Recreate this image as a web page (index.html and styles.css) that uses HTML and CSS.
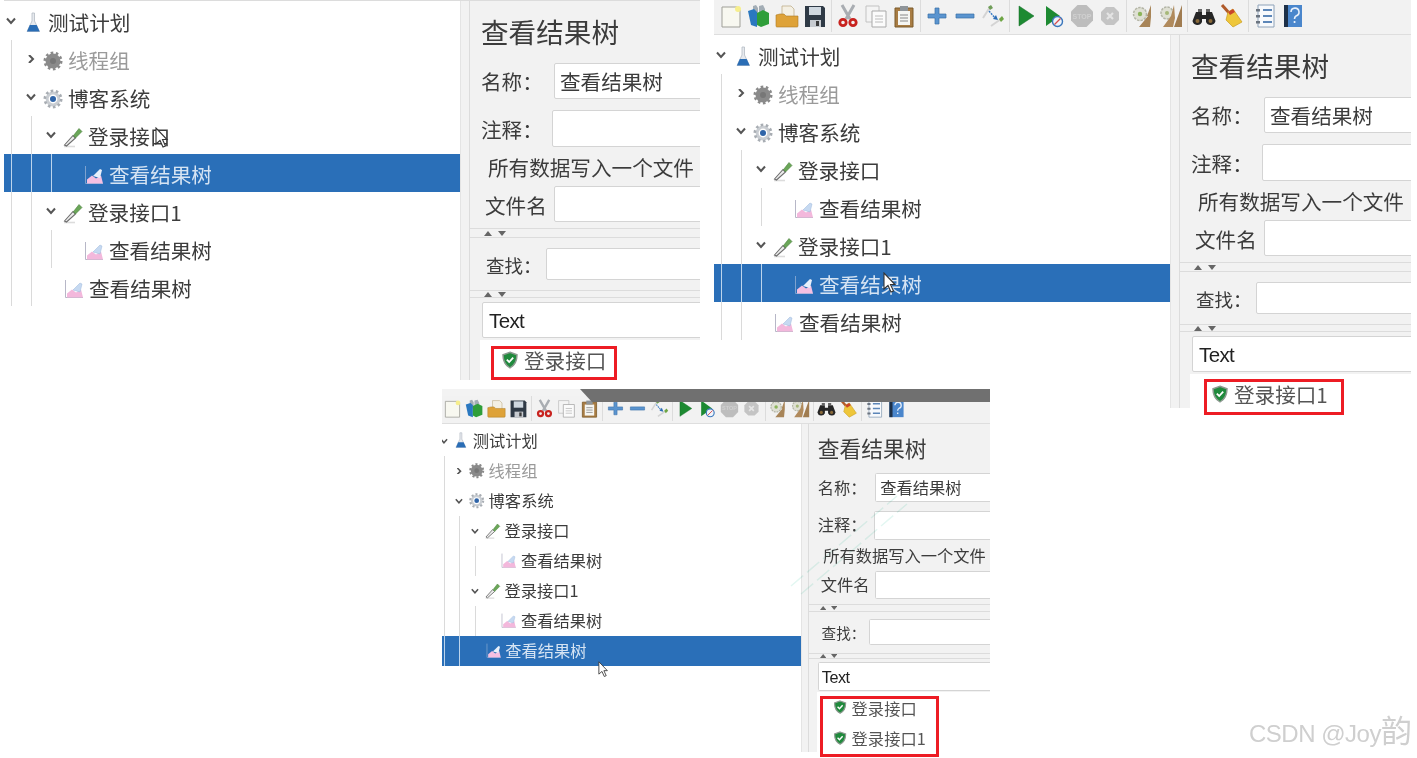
FILE: index.html
```html
<!DOCTYPE html>
<html lang="zh">
<head>
<meta charset="utf-8">
<title>查看结果树</title>
<link rel="stylesheet" href="styles.css">
</head>
<body>
<svg class="sprite" xmlns="http://www.w3.org/2000/svg">
  <defs>
    <symbol id="down" viewBox="0 0 10 8"><path d="M1 1.500 5 6 9 1.500" fill="none" stroke="#555" stroke-width="2"/></symbol>
    <symbol id="right" viewBox="0 0 10 8"><path d="M3 0 7 4 3 8" fill="none" stroke="#555" stroke-width="2"/></symbol>
    <symbol id="flask" viewBox="0 0 22 22"><path d="M10 1h2.500v8l5 10.500H5l5-10.500z" fill="#e6e9ee" stroke="#b4bbc4" stroke-width=".8"/><path d="M7.800 13h6.900l3 6.500H5z" fill="#2a6db5"/></symbol>
    <symbol id="gearg" viewBox="0 0 22 22"><circle cx="11" cy="11" r="7.500" fill="#8a8a8a"/><circle cx="11" cy="11" r="8.200" fill="none" stroke="#8a8a8a" stroke-width="2.600" stroke-dasharray="2.600 2.550"/><circle cx="11" cy="11" r="3" fill="#777"/></symbol>
    <symbol id="gearb" viewBox="0 0 22 22"><circle cx="11" cy="11" r="7.400" fill="#c9cdd2"/><circle cx="11" cy="11" r="8.200" fill="none" stroke="#a8adb3" stroke-width="2.600" stroke-dasharray="2.600 2.550"/><circle cx="11" cy="11" r="4.400" fill="#fff"/><circle cx="11" cy="11" r="3" fill="#2f64a8"/></symbol>
    <symbol id="pipette" viewBox="0 0 22 22"><path d="M2 20.500h11" stroke="#dcdcdc" stroke-width="1.600"/><path d="M2.500 19 11 9.500l2.500 2.500-9 8z" fill="#ececec" stroke="#6e6e6e" stroke-width="1.100"/><path d="M11.500 9.500l5.500-7 3 3-6.500 6.500z" fill="#6aa658" stroke="#4a7f3c" stroke-width=".6"/></symbol>
    <symbol id="chart" viewBox="0 0 22 22"><path d="M2.500 2v17.500H20" fill="none" stroke="#b7b7c7" stroke-width="1"/><path d="M4 19.500v-4l5-4 4 3 5-3 2 8z" fill="#f3b8dc"/><path d="M10 12l7-7 2 1-2 8z" fill="#c6d9f1" stroke="#9db8dc" stroke-width=".5"/></symbol>
    <symbol id="chartw" viewBox="0 0 22 22"><path d="M2.500 2v17.500H20" fill="none" stroke="#7da2cf" stroke-width="1"/><path d="M4 19.500v-4l5-4 4 3 5-3 2 8z" fill="#f6c0e2"/><path d="M10 12l7-7 2 1-2 8z" fill="#e8f0fb"/></symbol>
    <symbol id="shield" viewBox="0 0 18 18"><path d="M9 1.200 16 3.800c0 6.200-1.700 10.400-7 13C3.700 14.200 2 10 2 3.800z" fill="#1f8a3c" stroke="#8d9a90" stroke-width="1.500"/><path d="M5.800 8.600 8.200 11l4-4.400" fill="none" stroke="#fff" stroke-width="1.800"/></symbol>

    <symbol id="t-new" viewBox="0 0 24 24"><path d="M3 3h15l3 3v17H3z" fill="#f8f8f0" stroke="#9f9f98" stroke-width="1"/><circle cx="19" cy="5" r="3" fill="#f6ee8c"/></symbol>
    <symbol id="t-book" viewBox="0 0 24 24"><path d="M6 2l3-1 2 3v8H6zM12 2l4-1 2 4v7h-6z" fill="#a3adb5"/><path d="M1 7l6-2 3 3v15l-6-2z" fill="#2a78c0"/><path d="M10 9l6-3 6 3v11l-8 3-4-2z" fill="#2f9e3a"/></symbol>
    <symbol id="t-open" viewBox="0 0 24 24"><path d="M7 2h9l3 3v9H7z" fill="#f4f0e4" stroke="#b9a77f" stroke-width=".7"/><path d="M1 11l4-1h4l2 2h12v10c0 1-1 1-1 1H2s-1 0-1-1z" fill="#dea238" stroke="#ad7b22" stroke-width=".6"/></symbol>
    <symbol id="t-save" viewBox="0 0 24 24"><path d="M2 2h18l2 2v19H2z" fill="#2f3a46"/><path d="M6 3h12v8H6z" fill="#cfd8e0"/><path d="M7 16h11v7H7z" fill="#c7cbd0"/><path d="M13 17h3v5h-3z" fill="#3b3b3b"/></symbol>
    <symbol id="t-cut" viewBox="0 0 24 24"><path d="M6 1l8 14M18 1l-8 14" stroke="#a9adb2" stroke-width="3"/><circle cx="7" cy="18.500" r="3.200" fill="none" stroke="#c8231f" stroke-width="2.800"/><circle cx="17" cy="18.500" r="3.200" fill="none" stroke="#c8231f" stroke-width="2.800"/></symbol>
    <symbol id="t-copy" viewBox="0 0 24 24"><path d="M2 2h13v16H2z" fill="#f4f4f4" stroke="#c2c2c2"/><path d="M8 7h14v16H8z" fill="#fbfbfb" stroke="#a9a9a9"/><path d="M11 12h8M11 15h8M11 18h8" stroke="#bcbcbc"/></symbol>
    <symbol id="t-paste" viewBox="0 0 24 24"><path d="M3 4h18v19H3z" fill="#a87c43" stroke="#7b5a2a"/><path d="M6 7h12v14H6z" fill="#f6f6f2"/><path d="M8 2h8v5H8z" fill="#8e9499"/><path d="M8 11h8M8 14h8M8 17h8" stroke="#888"/></symbol>
    <symbol id="t-plus" viewBox="0 0 24 24"><path d="M10 4h4v6h7v4h-7v6h-4v-6H3v-4h7z" fill="#5a94cf" stroke="#3a70a8" stroke-width=".7"/></symbol>
    <symbol id="t-minus" viewBox="0 0 24 24"><path d="M3 10h18v4H3z" fill="#5a94cf" stroke="#3a70a8" stroke-width=".7"/></symbol>
    <symbol id="t-toggle" viewBox="0 0 24 24"><path d="M2 14l7-11M10 22l10-7" stroke="#d4d4d4" stroke-width="2"/><path d="M7 3l3-2 2 3-3 2z" fill="#6f9d58"/><path d="M18 15l3-3 2 3-3 3z" fill="#6ea544"/><path d="M8 7l6 7" stroke="#3a7cc4" stroke-width="1.400" stroke-dasharray="2 1"/><path d="M12 15l5 1-2-5z" fill="#2c6db6"/></symbol>
    <symbol id="t-play" viewBox="0 0 24 24"><path d="M5 2l15 10L5 22z" fill="#1d8a32" stroke="#156a26" stroke-width=".5"/></symbol>
    <symbol id="t-noproxy" viewBox="0 0 24 24"><path d="M4 2l14 10L4 22z" fill="#1d8a32"/><circle cx="15.500" cy="17.500" r="5" fill="#eef3fa" stroke="#3a76bb" stroke-width="1.400"/><path d="M12.500 20.500l6-6" stroke="#d84b4b" stroke-width="1.200"/></symbol>
    <symbol id="t-stop" viewBox="0 0 24 24"><path d="M7.500 1h9L23 7.500v9L16.500 23h-9L1 16.500v-9z" fill="#bdbdbd"/><text x="12" y="14.500" text-anchor="middle" font-size="7" font-family="Liberation Sans" font-weight="700" fill="#d0d0d0">STOP</text></symbol>
    <symbol id="t-x" viewBox="0 0 24 24"><path d="M8 3h8l5 5v8l-5 5H8l-5-5V8z" fill="#c4c4c4"/><path d="M9 9l6 6M15 9l-6 6" stroke="#e4e4e4" stroke-width="2.200"/></symbol>
    <symbol id="t-clear" viewBox="0 0 24 24"><circle cx="9" cy="10" r="6.500" fill="#dfe0d4" stroke="#b3b5a6" stroke-width="1.500" stroke-dasharray="2.500 1"/><circle cx="9" cy="10" r="2.200" fill="#8cb45a"/><path d="M20 1l-4 11 1 0-9 11h11l1-10z" fill="#a88558"/></symbol>
    <symbol id="t-clearall" viewBox="0 0 24 24"><circle cx="8" cy="9" r="6" fill="#dfe0d4" stroke="#b3b5a6" stroke-width="1.500" stroke-dasharray="2.500 1"/><circle cx="8" cy="9" r="2" fill="#a6b878"/><path d="M15 1l-3 11-8 11h10l2-9z" fill="#b08a5c"/><path d="M23 1l-4 11-4 11h8z" fill="#a07c50"/></symbol>
    <symbol id="t-bino" viewBox="0 0 24 24"><path d="M4 8h6v3h4V8h6l3.500 9a5 5 0 0 1-9.500 1v-3h-4v3a5 5 0 0 1-9.500-1z" fill="#262626"/><path d="M6 5h4v3H6zM14 5h4v3h-4z" fill="#666"/><circle cx="5.500" cy="17" r="2" fill="#8a6a3a"/><circle cx="18.500" cy="17" r="2" fill="#8a6a3a"/></symbol>
    <symbol id="t-broom" viewBox="0 0 24 24"><path d="M2 1l8 9" stroke="#b05a2a" stroke-width="3"/><path d="M8 8l5-3 9 13-9 5-7-7z" fill="#eec63a" stroke="#c99c22" stroke-width=".7"/><path d="M8 8l5-3 2 3-5 3z" fill="#c8452a"/></symbol>
    <symbol id="t-list" viewBox="0 0 24 24"><path d="M5 1h16v22H5z" fill="#f7f9fc" stroke="#8ea2b8"/><path d="M10 6h9M10 12h9M10 18h9" stroke="#5c86b8" stroke-width="2"/><path d="M3 5h4v2.500H3zM3 11h4v2.500H3zM3 17h4v2.500H3z" fill="#6b7480"/></symbol>
    <symbol id="t-help" viewBox="0 0 24 24"><path d="M3 1h18v22H3z" fill="#4a86cc"/><path d="M3 1h4v22H3z" fill="#1d3048"/><path d="M10 8a4 4 0 1 1 5 4c-1 .6-1.500 1-1.500 3" fill="none" stroke="#e8f0fb" stroke-width="1.600"/><path d="M12.700 17h1.700v2h-1.700z" fill="#e8f0fb"/></symbol>
    <symbol id="cursor" viewBox="0 0 14 22"><path d="M1 1v16l4-3.500 3 6.500 2.500-1-3-6.500H12z" fill="#fff" stroke="#333" stroke-width="1.100"/></symbol>
  </defs>
</svg>

<!-- 左上窗口 -->
<section class="win win-a">
  <div class="topline"></div>
  <div class="split">
    <div class="tree">
      <div class="row"><svg class="chev"><use href="#down"/></svg><svg class="ico"><use href="#flask"/></svg><span class="lbl">测试计划</span></div>
      <div class="row off"><i class="ind"></i><svg class="chev"><use href="#right"/></svg><svg class="ico"><use href="#gearg"/></svg><span class="lbl">线程组</span></div>
      <div class="row"><i class="ind"></i><svg class="chev"><use href="#down"/></svg><svg class="ico"><use href="#gearb"/></svg><span class="lbl">博客系统</span></div>
      <div class="row"><i class="ind"></i><i class="ind"></i><svg class="chev"><use href="#down"/></svg><svg class="ico"><use href="#pipette"/></svg><span class="lbl">登录接口</span></div>
      <div class="row sel"><i class="ind"></i><i class="ind"></i><i class="ind"></i><i class="chev"></i><svg class="ico"><use href="#chartw"/></svg><span class="lbl">查看结果树</span></div>
      <div class="row"><i class="ind"></i><i class="ind"></i><svg class="chev"><use href="#down"/></svg><svg class="ico"><use href="#pipette"/></svg><span class="lbl">登录接口1</span></div>
      <div class="row"><i class="ind"></i><i class="ind"></i><i class="ind"></i><i class="chev"></i><svg class="ico"><use href="#chart"/></svg><span class="lbl">查看结果树</span></div>
      <div class="row"><i class="ind"></i><i class="ind"></i><i class="chev"></i><svg class="ico"><use href="#chart"/></svg><span class="lbl">查看结果树</span></div>
    </div>
    <div class="panel">
      <div class="inner">
        <h2 class="title">查看结果树</h2>
        <div class="frow f-name"><span class="flabel">名称：</span><span class="field">查看结果树</span></div>
        <div class="frow f-note"><span class="flabel">注释：</span><span class="field"></span></div>
        <div class="legend">所有数据写入一个文件</div>
        <div class="frow f-file"><span class="flabel">文件名</span><span class="field"></span></div>
        <div class="divider div-a"><svg class="tri" viewBox="0 0 8 5"><path d="M0 5 4 0l4 5z"/></svg><svg class="tri" viewBox="0 0 8 5"><path d="M0 0h8L4 5z"/></svg></div>
        <div class="frow f-find"><span class="flabel">查找：</span><span class="field"></span></div>
        <div class="divider div-b"><svg class="tri" viewBox="0 0 8 5"><path d="M0 5 4 0l4 5z"/></svg><svg class="tri" viewBox="0 0 8 5"><path d="M0 0h8L4 5z"/></svg></div>
        <div class="combo">Text</div>
        <div class="results">
          <div class="res"><svg class="shield"><use href="#shield"/></svg><span>登录接口</span></div>
        </div>
      </div>
    </div>
  </div>
</section>

<!-- 右上窗口 -->
<section class="win win-b">
  <div class="toolbar">
    <svg class="tb"><use href="#t-new"/></svg><svg class="tb"><use href="#t-book"/></svg><svg class="tb"><use href="#t-open"/></svg><svg class="tb"><use href="#t-save"/></svg><i class="sep"></i>
    <svg class="tb"><use href="#t-cut"/></svg><svg class="tb"><use href="#t-copy"/></svg><svg class="tb"><use href="#t-paste"/></svg><i class="sep"></i>
    <svg class="tb"><use href="#t-plus"/></svg><svg class="tb"><use href="#t-minus"/></svg><svg class="tb"><use href="#t-toggle"/></svg><i class="sep"></i>
    <svg class="tb"><use href="#t-play"/></svg><svg class="tb"><use href="#t-noproxy"/></svg><svg class="tb"><use href="#t-stop"/></svg><svg class="tb"><use href="#t-x"/></svg><i class="sep"></i>
    <svg class="tb"><use href="#t-clear"/></svg><svg class="tb"><use href="#t-clearall"/></svg><i class="sep"></i>
    <svg class="tb"><use href="#t-bino"/></svg><svg class="tb"><use href="#t-broom"/></svg><i class="sep"></i>
    <svg class="tb"><use href="#t-list"/></svg><svg class="tb"><use href="#t-help"/></svg>
  </div>
  <div class="split">
    <div class="tree">
      <div class="row"><svg class="chev"><use href="#down"/></svg><svg class="ico"><use href="#flask"/></svg><span class="lbl">测试计划</span></div>
      <div class="row off"><i class="ind"></i><svg class="chev"><use href="#right"/></svg><svg class="ico"><use href="#gearg"/></svg><span class="lbl">线程组</span></div>
      <div class="row"><i class="ind"></i><svg class="chev"><use href="#down"/></svg><svg class="ico"><use href="#gearb"/></svg><span class="lbl">博客系统</span></div>
      <div class="row"><i class="ind"></i><i class="ind"></i><svg class="chev"><use href="#down"/></svg><svg class="ico"><use href="#pipette"/></svg><span class="lbl">登录接口</span></div>
      <div class="row"><i class="ind"></i><i class="ind"></i><i class="ind"></i><i class="chev"></i><svg class="ico"><use href="#chart"/></svg><span class="lbl">查看结果树</span></div>
      <div class="row"><i class="ind"></i><i class="ind"></i><svg class="chev"><use href="#down"/></svg><svg class="ico"><use href="#pipette"/></svg><span class="lbl">登录接口1</span></div>
      <div class="row sel"><i class="ind"></i><i class="ind"></i><i class="ind"></i><i class="chev"></i><svg class="ico"><use href="#chartw"/></svg><span class="lbl">查看结果树</span></div>
      <div class="row"><i class="ind"></i><i class="ind"></i><i class="chev"></i><svg class="ico"><use href="#chart"/></svg><span class="lbl">查看结果树</span></div>
    </div>
    <div class="panel">
      <div class="inner">
        <h2 class="title">查看结果树</h2>
        <div class="frow f-name"><span class="flabel">名称：</span><span class="field">查看结果树</span></div>
        <div class="frow f-note"><span class="flabel">注释：</span><span class="field"></span></div>
        <div class="legend">所有数据写入一个文件</div>
        <div class="frow f-file"><span class="flabel">文件名</span><span class="field"></span></div>
        <div class="divider div-a"><svg class="tri" viewBox="0 0 8 5"><path d="M0 5 4 0l4 5z"/></svg><svg class="tri" viewBox="0 0 8 5"><path d="M0 0h8L4 5z"/></svg></div>
        <div class="frow f-find"><span class="flabel">查找：</span><span class="field"></span></div>
        <div class="divider div-b"><svg class="tri" viewBox="0 0 8 5"><path d="M0 5 4 0l4 5z"/></svg><svg class="tri" viewBox="0 0 8 5"><path d="M0 0h8L4 5z"/></svg></div>
        <div class="combo">Text</div>
        <div class="results">
          <div class="res"><svg class="shield"><use href="#shield"/></svg><span>登录接口1</span></div>
        </div>
      </div>
    </div>
  </div>
</section>

<!-- 下方窗口 -->
<section class="win win-c">
  <div class="tabstrip"></div>
  <div class="scaled">
    <div class="toolbar">
      <svg class="tb"><use href="#t-new"/></svg><svg class="tb"><use href="#t-book"/></svg><svg class="tb"><use href="#t-open"/></svg><svg class="tb"><use href="#t-save"/></svg><i class="sep"></i>
      <svg class="tb"><use href="#t-cut"/></svg><svg class="tb"><use href="#t-copy"/></svg><svg class="tb"><use href="#t-paste"/></svg><i class="sep"></i>
      <svg class="tb"><use href="#t-plus"/></svg><svg class="tb"><use href="#t-minus"/></svg><svg class="tb"><use href="#t-toggle"/></svg><i class="sep"></i>
      <svg class="tb"><use href="#t-play"/></svg><svg class="tb"><use href="#t-noproxy"/></svg><svg class="tb"><use href="#t-stop"/></svg><svg class="tb"><use href="#t-x"/></svg><i class="sep"></i>
      <svg class="tb"><use href="#t-clear"/></svg><svg class="tb"><use href="#t-clearall"/></svg><i class="sep"></i>
      <svg class="tb"><use href="#t-bino"/></svg><svg class="tb"><use href="#t-broom"/></svg><i class="sep"></i>
      <svg class="tb"><use href="#t-list"/></svg><svg class="tb"><use href="#t-help"/></svg>
    </div>
    <div class="split">
      <div class="tree">
        <div class="row"><svg class="chev"><use href="#down"/></svg><svg class="ico"><use href="#flask"/></svg><span class="lbl">测试计划</span></div>
        <div class="row off"><i class="ind"></i><svg class="chev"><use href="#right"/></svg><svg class="ico"><use href="#gearg"/></svg><span class="lbl">线程组</span></div>
        <div class="row"><i class="ind"></i><svg class="chev"><use href="#down"/></svg><svg class="ico"><use href="#gearb"/></svg><span class="lbl">博客系统</span></div>
        <div class="row"><i class="ind"></i><i class="ind"></i><svg class="chev"><use href="#down"/></svg><svg class="ico"><use href="#pipette"/></svg><span class="lbl">登录接口</span></div>
        <div class="row"><i class="ind"></i><i class="ind"></i><i class="ind"></i><i class="chev"></i><svg class="ico"><use href="#chart"/></svg><span class="lbl">查看结果树</span></div>
        <div class="row"><i class="ind"></i><i class="ind"></i><svg class="chev"><use href="#down"/></svg><svg class="ico"><use href="#pipette"/></svg><span class="lbl">登录接口1</span></div>
        <div class="row"><i class="ind"></i><i class="ind"></i><i class="ind"></i><i class="chev"></i><svg class="ico"><use href="#chart"/></svg><span class="lbl">查看结果树</span></div>
        <div class="row sel"><i class="ind"></i><i class="ind"></i><i class="chev"></i><svg class="ico"><use href="#chartw"/></svg><span class="lbl">查看结果树</span></div>
      </div>
      <div class="panel">
        <div class="inner">
          <h2 class="title">查看结果树</h2>
          <div class="frow f-name"><span class="flabel">名称：</span><span class="field">查看结果树</span></div>
          <div class="frow f-note"><span class="flabel">注释：</span><span class="field"></span></div>
          <div class="legend">所有数据写入一个文件</div>
          <div class="frow f-file"><span class="flabel">文件名</span><span class="field"></span></div>
          <div class="divider div-a"><svg class="tri" viewBox="0 0 8 5"><path d="M0 5 4 0l4 5z"/></svg><svg class="tri" viewBox="0 0 8 5"><path d="M0 0h8L4 5z"/></svg></div>
          <div class="frow f-find"><span class="flabel">查找：</span><span class="field"></span></div>
          <div class="divider div-b"><svg class="tri" viewBox="0 0 8 5"><path d="M0 5 4 0l4 5z"/></svg><svg class="tri" viewBox="0 0 8 5"><path d="M0 0h8L4 5z"/></svg></div>
          <div class="combo">Text</div>
          <div class="results">
            <div class="res"><svg class="shield"><use href="#shield"/></svg><span>登录接口</span></div>
            <div class="res"><svg class="shield"><use href="#shield"/></svg><span>登录接口1</span></div>
          </div>
        </div>
      </div>
    </div>
  </div>
</section>

<svg class="ghost" viewBox="0 0 130 110"><path d="M6 96 112 6M16 104 122 14" fill="none" stroke="#e3f7f2" stroke-width="1.500" stroke-dasharray="16 5"/></svg>
<div class="band"></div>
<div class="redbox box-a"></div>
<div class="redbox box-b"></div>
<div class="redbox box-c"></div>
<svg class="cursor cur-a"><use href="#cursor"/></svg>
<svg class="cursor cur-b"><use href="#cursor"/></svg>
<svg class="cursor cur-c"><use href="#cursor"/></svg>
<div class="mark">CSDN @Joy<span class="mark-cjk">韵</span></div>
</body>
</html>
```

FILE: styles.css
```css
* { box-sizing: border-box; }
html, body { margin: 0; padding: 0; }
body {
  position: relative;
  width: 1417px;
  height: 758px;
  overflow: hidden;
  background: #fff;
  font-family: "Noto Sans CJK SC", "Noto Sans", sans-serif;
  color: #3c3c3c;
}
.sprite { position: absolute; width: 0; height: 0; }

.win { position: absolute; overflow: hidden; background: #fff; filter: blur(0.35px); --lift: 4px; }
.win-a { left: 4px; top: 0; width: 696px; height: 380px; }
.win-b { left: 714px; top: 0; width: 697px; height: 408px; }
.win-c { left: 442px; top: 389px; width: 548px; height: 363px; --lift: 0px; }
.win-a .split { height: 379px; }
.win-b .split { height: 373px; }
.win-c .split { height: 450px; }
.tabstrip { height: 7px; background: #f3f3f3; }
.scaled { zoom: 0.79; width: 694px; }
.topline { height: 1px; background: #dcdcdc; }

.toolbar {
  display: flex;
  align-items: center;
  height: 35px;
  padding: 0 0 3px 3px;
  background: #f2f2f2;
  border-bottom: 1px solid #dedede;
}
.tb { width: 24px; height: 24px; margin: 0 2px; flex: none; }
.sep { width: 1px; height: 32px; margin: 0 2px; background: #dcdcdc; flex: none; }
.win-c .toolbar { padding-left: 0; }
.win-c .tb:first-child { margin-left: 1px; }
.win-c .sep { margin: 0 2.1px; }

.split { display: flex; }
.tree { width: 456px; flex: none; padding-top: 1px; background: #fff; }
.win-c .tree { width: 454px; padding-top: 3px; }
.row {
  display: flex;
  align-items: center;
  height: 38px;
  padding-left: 7px;
  padding-top: var(--lift);
  font-size: 20.6px;
  line-height: 34px;
  white-space: nowrap;
}
.win-c .row { padding-left: 2px; }
.row.off { color: #9a9a9a; }
.row.sel { background: #2a6fb8; color: #d6e4f3; }
.ind { width: 20px; height: 38px; flex: none; align-self: flex-start; margin-top: calc(-1 * var(--lift)); border-left: 1px solid #dadada; }
.sel .ind { border-left-color: #bcd4ec; }
.chev { width: 10px; height: 8px; margin-left: -5px; margin-top: calc(-1 * var(--lift)); flex: none; display: block; }
i.chev { margin-right: 1px; }
.ico { width: 22px; height: 22px; margin-left: 6px; margin-right: 4px; flex: none; }
.lbl { margin-top: -2px; }

.panel { flex: 1; padding-left: 8px; background: #f2f2f2; border-left: 1px solid #e4e4e4; min-width: 0; overflow: hidden; }
.inner { height: 100%; border-left: 1px solid #dcdcdc; padding-top: 10px; width: 300px; }
.win-c .inner { padding-top: 11px; }
.title { margin: 0 0 12px 11px; font-size: 27.6px; line-height: 40px; font-weight: 400; color: #3c3c3c; }

.frow { display: flex; align-items: center; }
.flabel { font-size: 20.6px; line-height: 30px; white-space: nowrap; flex: none; }
.field {
  display: block;
  width: 260px;
  flex: none;
  background: #fff;
  border: 1px solid #d4d4d4;
  border-radius: 2px;
  padding-left: 5px;
  font-size: 20.6px;
  line-height: 34px;
  height: 36px;
  white-space: nowrap;
}
.f-name .flabel { width: 73px; margin-left: 11px; }
.f-note { margin-top: 11px; }
.f-note .flabel { width: 71px; margin-left: 11px; }
.f-note .field { height: 37px; }
.legend { margin: 5px 0 0 18px; font-size: 20.6px; line-height: 30px; white-space: nowrap; }
.f-file { margin-top: 4px; }
.f-file .flabel { width: 69px; margin-left: 15px; padding-top: 1px; }
.divider {
  display: flex;
  align-items: center;
  gap: 6px;
  padding-left: 14px;
  border-top: 1px solid #dcdcdc;
  border-bottom: 1px solid #dcdcdc;
}
.div-a { height: 10px; margin-top: 6px; }
.div-b { height: 8px; margin-top: 10px; }
.tri { width: 8px; height: 5px; fill: #666; flex: none; }
.f-find { margin-top: 10px; }
.f-find .flabel { width: 60px; margin-left: 16px; font-size: 18.5px; padding-top: 1px; }
.f-find .field { height: 32px; }
.combo {
  margin: 4px 0 0 12px;
  height: 36px;
  width: 260px;
  background: #fff;
  border: 1px solid #d4d4d4;
  border-radius: 2px;
  padding-left: 6px;
  font-family: "Liberation Sans", "Noto Sans", sans-serif;
  font-size: 20.5px;
  letter-spacing: -0.6px;
  line-height: 36px;
  color: #222;
}
.win-c .combo { padding-left: 3px; }
.results { margin: 2px 0 0 10px; height: 120px; background: #fff; }
.res { display: flex; align-items: center; height: 39px; padding-left: 21px; font-size: 20.6px; color: #555; white-space: nowrap; }
.shield { width: 18px; height: 18px; margin-right: 5px; flex: none; }

.ghost { position: absolute; left: 785px; top: 490px; width: 130px; height: 110px; mix-blend-mode: multiply; }
.band {
  position: absolute;
  left: 580px;
  top: 389px;
  width: 410px;
  height: 13px;
  background: #707070;
  clip-path: polygon(0 0, 100% 0, 100% 100%, 12px 100%);
}
.redbox { position: absolute; border: 3px solid #ed1c24; }
.box-a { left: 491px; top: 346px; width: 126px; height: 34px; }
.box-b { left: 1204px; top: 379px; width: 140px; height: 36px; }
.box-c { left: 820px; top: 696px; width: 119px; height: 61px; }
.cursor { position: absolute; width: 14px; height: 22px; }
.cur-a { left: 155px; top: 127px; }
.cur-b { left: 883px; top: 272px; }
.cur-c { left: 598px; top: 661px; width: 11px; height: 17px; }
.mark {
  position: absolute;
  left: 1249px;
  top: 713px;
  font-family: "Liberation Sans", "Noto Sans CJK SC", sans-serif;
  font-size: 24px;
  letter-spacing: -0.5px;
  line-height: 38px;
  color: #cfcfcf;
  white-space: nowrap;
}
.mark-cjk { font-size: 31px; letter-spacing: 0; }
```
